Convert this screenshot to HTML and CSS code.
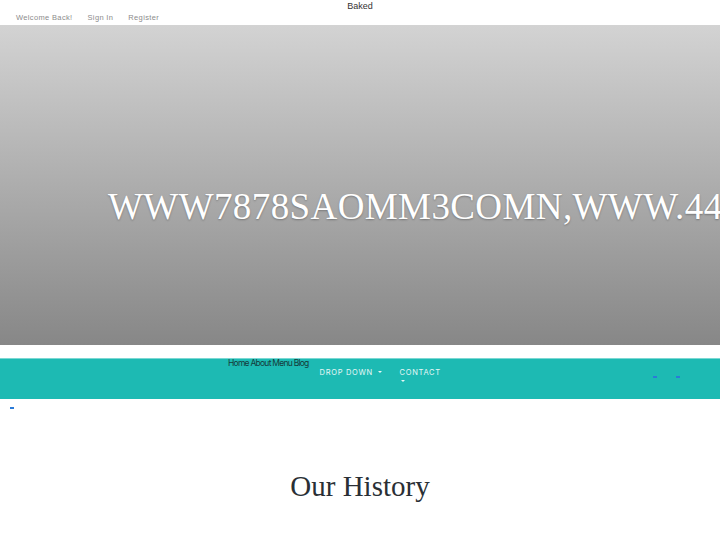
FILE: index.html
```html
<!DOCTYPE html>
<html lang="en">
<head>
    <meta charset="UTF-8">
    <title>Baked</title>
    <link rel="stylesheet" href="styles.css">
</head>
<body>
    <div class="brand">Baked</div>
    <div class="top-links">
        <a href="#">Welcome Back!</a>
        <a href="#">Sign In</a>
        <a href="#">Register</a>
    </div>

    <div class="hero">
        <h1>WWW7878SAOMM3COMN,WWW.4499KJCOM</h1>
    </div>

    <nav class="main-nav">
        <div class="plain-links">Home About Menu Blog</div>
        <div class="nav-item">DROP DOWN <span class="caret"></span></div>
        <div class="nav-item stacked">CONTACT <span class="caret"></span></div>
        <div class="nav-tools">
            <span class="dash"></span>
            <span class="dash"></span>
        </div>
    </nav>
    <div class="after-nav"><span class="dash"></span></div>

    <section class="history">
        <h2>Our History</h2>
    </section>
</body>
</html>
```
FILE: styles.css
```css
body {
    margin: 0;
    font-family: "Liberation Sans", Arial, sans-serif;
    background: #fff;
    overflow: hidden;
}
.brand {
    text-align: center;
    font-size: 9px;
    color: #333;
    padding-top: 1px;
    height: 12px;
}
.top-links {
    display: flex;
    gap: 15px;
    padding-left: 16px;
    height: 12px;
    font-size: 7.5px;
    letter-spacing: 0.35px;
}
.top-links a {
    color: #8c8c8c;
    text-decoration: none;
}
.hero {
    height: 320px;
    background: linear-gradient(#d3d3d3, #878787);
    overflow: hidden;
    display: flex;
    align-items: center;
    padding-top: 42px;
    box-sizing: border-box;
}
.hero h1 {
    margin: 0 0 0 108px;
    white-space: nowrap;
    font-family: "Liberation Serif", serif;
    font-weight: normal;
    font-size: 37px;
    letter-spacing: 0.4px;
    color: #fff;
    text-shadow: 0 1px 2px rgba(0,0,0,0.3);
}
.main-nav {
    margin-top: 13px;
    height: 40px;
    background: #1dbab3;
    border-top: 1px solid #7ad8d3;
    display: flex;
    align-items: flex-start;
    padding-left: 228px;
}
.plain-links {
    font-family: Inter, sans-serif;
    font-size: 8.5px;
    letter-spacing: -0.75px;
    color: #163a3a;
    margin-top: -1px;
}
.nav-item {
    font-family: Inter, sans-serif;
    font-size: 7.5px;
    letter-spacing: 0.7px;
    color: #e6f7f6;
    margin-top: 9px;
    margin-left: 11px;
    width: 69px;
}
.nav-item.stacked {
    width: 40px;
}
.nav-item.stacked .caret {
    display: block;
    margin: 3px 0 0 1px;
}
.caret {
    display: inline-block;
    width: 0;
    height: 0;
    border-left: 2px solid transparent;
    border-right: 2px solid transparent;
    border-top: 2px solid #e6f7f6;
    vertical-align: 2px;
    margin-left: 2px;
}
.nav-tools {
    margin-left: auto;
    margin-right: 40px;
    margin-top: 17px;
    display: flex;
    gap: 19px;
}
.dash {
    display: inline-block;
    width: 4px;
    height: 2px;
    background: #2b7bd8;
}
.after-nav {
    padding: 5px 0 0 10px;
    line-height: 0;
}
.history h2 {
    margin: 61px 0 0;
    text-align: center;
    font-family: "Liberation Serif", serif;
    font-weight: normal;
    font-size: 29px;
    color: #2a2f35;
}
```
